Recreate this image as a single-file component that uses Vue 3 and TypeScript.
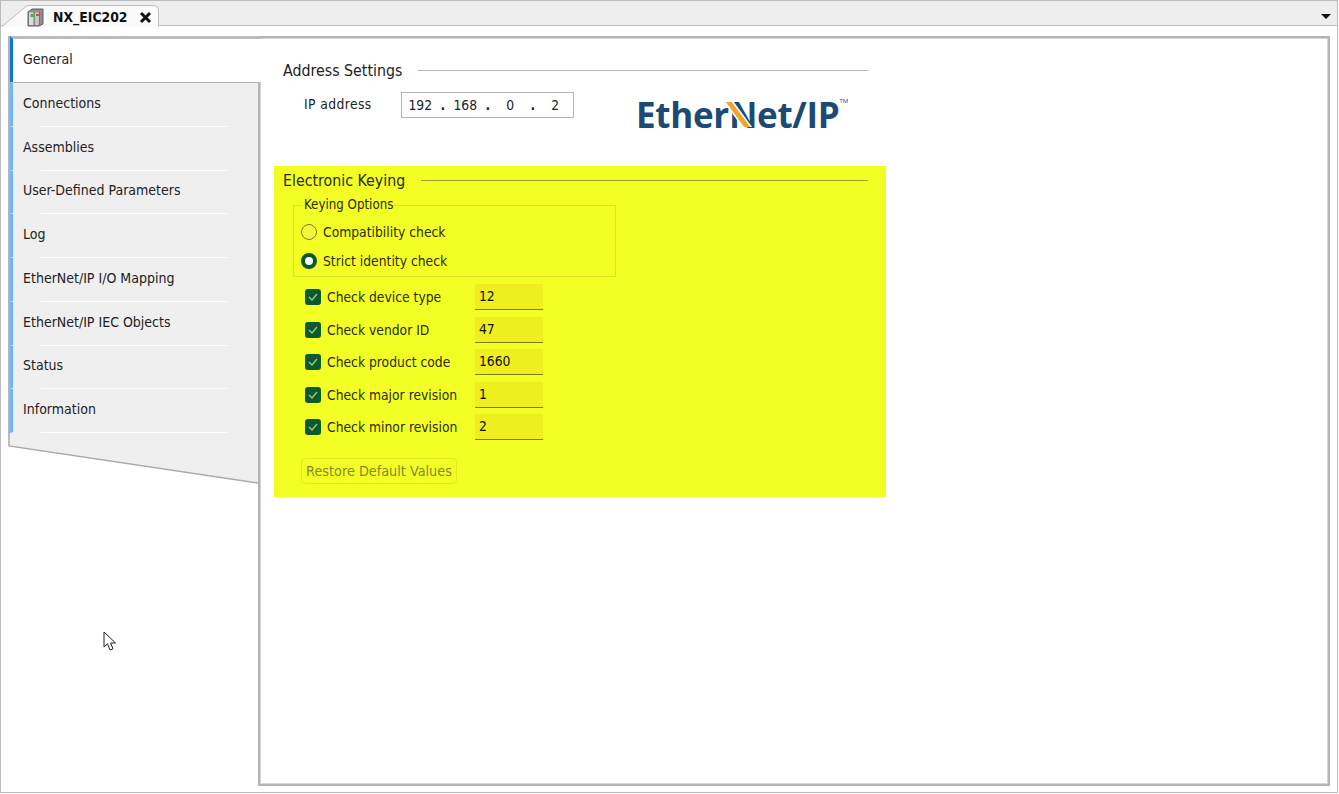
<script setup lang="ts">
interface KeyCheck {
  label: string
  value: string
}

const sections: string[] = [
  'Connections',
  'Assemblies',
  'User-Defined Parameters',
  'Log',
  'EtherNet/IP I/O Mapping',
  'EtherNet/IP IEC Objects',
  'Status',
  'Information',
]

const checks: KeyCheck[] = [
  { label: 'Check device type', value: '12' },
  { label: 'Check vendor ID', value: '47' },
  { label: 'Check product code', value: '1660' },
  { label: 'Check major revision', value: '1' },
  { label: 'Check minor revision', value: '2' },
]
</script>

<template>
  <div class="window">
    <div class="tabstrip">
      <div class="tab">
        <svg class="tab-shape" width="160" height="26" viewBox="0 0 160 26">
          <path d="M1 25.5 L25 5.5 Q26 4.5 28 4.5 L152 4.5 Q157.5 4.5 157.5 10 L157.5 26 L1 26 Z" fill="#fbfbfb" />
          <path d="M1 25.5 L25 5.5 Q26 4.5 28 4.5 L152 4.5 Q157.5 4.5 157.5 10 L157.5 25.5" fill="none" stroke="#bdbdbd" />
        </svg>
        <svg class="tab-icon" width="17" height="19" viewBox="0 0 17 19">
          <path d="M1 4 L5 1 L16 1 L16 16 L12 18 L1 18 Z" fill="#8f8f8f" stroke="#5f5f5f" />
          <path d="M2 4.5 H7 V17 H2 Z" fill="#dcdcdc" />
          <path d="M7.5 4.5 H12 V17 H7.5 Z" fill="#c6c6c6" />
          <path d="M7 4 V18 M12.5 3.5 V18" stroke="#6f6f6f" />
          <rect x="3.5" y="6" width="3" height="3" fill="#2fbf3f" />
          <rect x="9" y="6" width="3" height="2" fill="#c9504a" />
        </svg>
        <span class="tab-title">NX_EIC202</span>
        <svg class="tab-close" width="13" height="13" viewBox="0 0 13 13">
          <path d="M2 2 L11 11 M11 2 L2 11" stroke="#111" stroke-width="3" />
        </svg>
      </div>
      <svg class="tab-menu" width="10" height="5" viewBox="0 0 10 5">
        <path d="M0 0 H10 L5 5 Z" fill="#111" />
      </svg>
    </div>

    <div class="body">
      <aside class="sidebar">
        <div class="nav-active">General</div>
        <div class="nav-list">
          <div v-for="name in sections" :key="name" class="nav-item">
            <span class="nav-text">{{ name }}</span>
            <span class="nav-rule"></span>
          </div>
        </div>
        <svg class="nav-tail" width="250" height="51" viewBox="0 0 250 51">
          <path d="M0 0 H250 V50 L0 13 Z" fill="#efefef" />
          <path d="M1 0 V13 L250 50" fill="none" stroke="#a9a9a9" stroke-width="1.4" />
        </svg>
      </aside>

      <main class="panel">
        <section class="address">
          <div class="heading">
            <span>Address Settings</span>
            <span class="heading-line"></span>
          </div>
          <div class="ip-row">
            <span class="ip-label">IP address</span>
            <div class="ip-box">
              <span>192</span><span class="dot">.</span>
              <span>168</span><span class="dot">.</span>
              <span>0</span><span class="dot">.</span>
              <span>2</span>
            </div>
            <div class="logo">Ether<span class="logo-n">N<i></i></span>et/IP<sup>TM</sup></div>
          </div>
        </section>

        <section class="keying">
          <div class="heading heading-key">
            <span>Electronic Keying</span>
            <span class="heading-line"></span>
          </div>

          <fieldset class="options">
            <legend>Keying Options</legend>
            <div class="radio-row">
              <span class="radio"></span>
              <span>Compatibility check</span>
            </div>
            <div class="radio-row">
              <span class="radio radio-on"></span>
              <span>Strict identity check</span>
            </div>
          </fieldset>

          <div class="checks">
            <div v-for="item in checks" :key="item.label" class="check-row">
              <span class="checkbox">
                <svg width="10" height="8" viewBox="0 0 10 8">
                  <path d="M1 4 L4 7 L9 1" fill="none" stroke="#a8c878" stroke-width="1.3" />
                </svg>
              </span>
              <span class="check-label">{{ item.label }}</span>
              <span class="check-value">{{ item.value }}</span>
            </div>
          </div>

          <div class="restore">Restore Default Values</div>
        </section>

        <svg class="pointer" width="14" height="21" viewBox="0 0 14 21">
          <path d="M1 1 V16 L4.5 12.8 L7 19 L10 17.8 L7.6 12 L12.5 12 Z" fill="#fff" stroke="#222" stroke-linejoin="round" />
        </svg>
      </main>
    </div>
  </div>
</template>

<style>
html,
body {
  margin: 0;
  background: #fff;
}
</style>

<style scoped>
.window {
  box-sizing: border-box;
  width: 1338px;
  height: 793px;
  display: flex;
  flex-direction: column;
  border: 1px solid #bcbcbc;
  background: #fff;
  color: #222;
  font-family: "DejaVu Sans Condensed", "DejaVu Sans", sans-serif;
  font-size: 13.75px;
}

.tabstrip {
  flex: none;
  height: 25px;
  display: flex;
  align-items: center;
  justify-content: space-between;
  background: #eeeeee;
  border-bottom: 1px solid #bcbcbc;
  box-sizing: border-box;
  padding-right: 6px;
}

.tab {
  position: relative;
  width: 160px;
  height: 25px;
  margin-top: 1px;
  align-self: flex-start;
  display: flex;
  align-items: center;
}

.tab-shape {
  position: absolute;
  left: 0;
  top: -1px;
}

.tab-icon {
  position: relative;
  margin: 6px 0 0 26px;
}

.tab-title {
  position: relative;
  margin: 5px 0 0 9px;
  font-weight: 700;
  font-size: 13.85px;
  color: #111;
}

.tab-close {
  position: relative;
  margin: 6px 0 0 11px;
}

.tab-menu {
  margin-top: 7px;
}

.body {
  flex: 1;
  min-height: 0;
  display: flex;
  padding: 10px 7px 6px 7px;
}

.sidebar {
  flex: none;
  width: 250px;
  position: relative;
  z-index: 1;
}

.nav-active {
  box-sizing: border-box;
  width: 251px;
  height: 46px;
  margin-left: 2px;
  padding: 0 0 3px 10px;
  display: flex;
  align-items: center;
  background: #fff;
  border-top: 3px solid #bcbcbc;
  border-left: 3px solid #0a78d8;
  box-shadow: -2px 0 0 #b5b5b5;
  font-size: 14px;
}

.nav-list {
  background: #efefef;
  border-left: 2px solid #b5b5b5;
  border-top: 1px solid #b5b5b5;
  font-size: 14px;
}

.nav-item {
  box-sizing: border-box;
  position: relative;
  height: 43.75px;
  display: flex;
  align-items: center;
  padding: 0 0 3px 10px;
  border-left: 3px solid #6cb6ff;
  border-bottom: 1px solid #efefef;
}

.nav-rule {
  position: absolute;
  left: 28px;
  right: 31px;
  bottom: -1px;
  height: 1px;
  background: #fff;
}

.nav-tail {
  display: block;
}

.panel {
  flex: 1;
  position: relative;
  box-sizing: border-box;
  padding: 1px;
  border: 2px solid #b4b4b4;
  box-shadow: inset 0 0 0 1px #d6d6d6;
}

.address {
  padding: 22px 0 0 22px;
  width: 585px;
  height: 105px;
  box-sizing: content-box;
}

.heading {
  display: flex;
  align-items: center;
  gap: 16px;
  height: 18px;
  font-size: 15.8px;
}

.heading-line {
  flex: 1;
  height: 1px;
  background: #b5b5b5;
}

.heading-key .heading-line {
  background: #a0a020;
}

.ip-row {
  display: flex;
  align-items: flex-start;
  margin-top: 13px;
}

.ip-label {
  width: 97px;
  padding-left: 21px;
  box-sizing: content-box;
  line-height: 24px;
  letter-spacing: 0.4px;
}

.ip-box {
  box-sizing: border-box;
  width: 173px;
  height: 26px;
  border: 1px solid #b4b4b4;
  display: grid;
  grid-template-columns: repeat(7, 22.5px);
  justify-items: center;
  align-items: center;
  padding-left: 7px;
}

.dot {
  font-weight: 700;
}

.logo {
  position: relative;
  margin: 3px 0 0 62px;
  font-family: "Open Sans", sans-serif;
  font-weight: 700;
  font-size: 35px;
  line-height: 40px;
  letter-spacing: -0.3px;
  color: #1b4a75;
  white-space: nowrap;
}

.logo sup {
  font-size: 6px;
  line-height: 1;
  vertical-align: 25px;
  letter-spacing: 0;
  font-weight: 400;
}

.logo-n {
  position: relative;
  display: inline-block;
}

.logo-n i {
  position: absolute;
  left: 6px;
  top: 7px;
  width: 6px;
  height: 25px;
  background: #f2a52c;
  transform: skewX(36deg);
  box-shadow: -2px 0 0 #fff, 2px 0 0 #fff;
}

.keying {
  box-sizing: border-box;
  width: 612px;
  height: 331px;
  margin-left: 13px;
  padding: 5px 18px 0 9px;
  background: #f3ff24;
  color: #2b2b10;
}

.options {
  box-sizing: border-box;
  width: 323px;
  height: 79px;
  margin: 9px 0 0 10px;
  padding: 5px 0 0 7px;
  border: 1px solid #dfe224;
}

.options legend {
  margin-left: 2px;
  padding: 0 1px;
  line-height: 14px;
  font-size: 13.2px;
}

.radio-row {
  display: flex;
  align-items: center;
  gap: 6px;
  height: 29px;
}

.radio {
  box-sizing: border-box;
  width: 16px;
  height: 16px;
  border-radius: 50%;
  border: 1.5px solid #7d7d20;
  background: #f6f63a;
}

.radio-on {
  border: 4.5px solid #0a5a30;
  background: #fff;
}

.checks {
  margin: 4px 0 0 22px;
}

.check-row {
  display: flex;
  align-items: center;
  height: 32.5px;
}

.checkbox {
  box-sizing: border-box;
  width: 16px;
  height: 16px;
  border-radius: 3px;
  background: #0a5a30;
  display: flex;
  align-items: center;
  justify-content: center;
}

.check-label {
  width: 148px;
  margin-left: 6px;
  white-space: nowrap;
}

.check-value {
  box-sizing: border-box;
  width: 68px;
  height: 26px;
  padding-left: 4px;
  line-height: 25px;
  background: #efee1e;
  border-bottom: 1px solid #7a7a18;
  color: #111;
}

.restore {
  box-sizing: border-box;
  width: 156px;
  height: 26px;
  margin: 14px 0 0 18px;
  border: 1px solid #e6e622;
  border-radius: 4px;
  display: flex;
  align-items: center;
  justify-content: center;
  font-size: 14.3px;
  color: #87872c;
  white-space: nowrap;
}

.pointer {
  position: absolute;
  left: -157px;
  top: 593px;
}
</style>
